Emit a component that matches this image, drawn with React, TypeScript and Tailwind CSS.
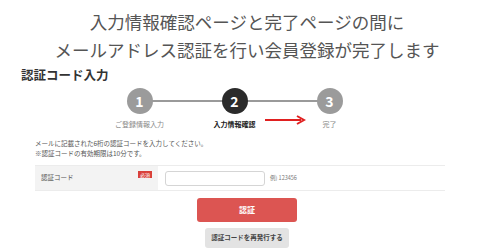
import React from 'react';

const steps = [
  { no: 1, label: 'ご登録情報入力', state: 'done' },
  { no: 2, label: '入力情報確認', state: 'current' },
  { no: 3, label: '完了', state: 'todo' },
];

export default function App() {
  return (
    <div className="w-[494px] h-[251px] bg-white overflow-hidden text-[#444] font-['Noto_Sans_CJK_JP','Noto_Sans',sans-serif]">
      {/* Caption */}
      <div className="pt-[8px] text-center text-[17.5px] leading-[28px] text-[#555]">
        <p>入力情報確認ページと完了ページの間に</p>
        <p>メールアドレス認証を行い会員登録が完了します</p>
      </div>

      <h2 className="mt-[1px] pl-[21px] text-[12.5px] leading-[20px] font-bold text-[#333]">認証コード入力</h2>

      {/* Stepper */}
      <div className="relative mt-[3px] flex pl-[92px]">
        <div className="absolute left-[140px] top-[12px] w-[190px] h-[2px] bg-[#9a9a9a]" />
        {steps.map((s) => (
          <div key={s.no} className="relative w-[95px] flex flex-col items-center">
            <div
              className={`w-[26px] h-[26px] rounded-full flex items-center justify-center text-[14px] font-bold text-white ${
                s.state === 'current' ? 'bg-[#2b2b2b]' : 'bg-[#9b9b9b]'
              }`}
            >
              {s.no}
            </div>
            <span
              className={`mt-[5px] text-[7px] leading-[10px] ${
                s.state === 'current' ? 'font-bold text-[#222]' : 'text-[#888]'
              }`}
            >
              {s.label}
            </span>
          </div>
        ))}
        <svg className="absolute left-[264px] top-[27px]" width="42" height="10" viewBox="0 0 42 10">
          <line x1="1" y1="5" x2="37" y2="5" stroke="#e02020" strokeWidth="2" />
          <path d="M33 1 L40 5 L33 9" fill="none" stroke="#e02020" strokeWidth="2" />
        </svg>
      </div>

      {/* Notes */}
      <div className="mt-[9px] pl-[35px] text-[6.5px] leading-[10px] text-[#555]">
        <p>メールに記載された6桁の認証コードを入力してください。</p>
        <p>※認証コードの有効期限は10分です。</p>
      </div>

      {/* Form row */}
      <div className="mt-[7px] ml-[35px] w-[410px] h-[26px] flex border-y border-[#ececec]">
        <div className="w-[123px] bg-[#f3f3f3] flex items-start justify-between pl-[6px] pr-[6px] pt-[6px]">
          <span className="text-[6.5px] leading-[10px] text-[#555]">認証コード</span>
          <span className="bg-[#d9403a] text-white text-[5px] leading-[7px] px-[2px] mt-[-1px]">必須</span>
        </div>
        <div className="flex items-center pl-[7px] gap-[5px]">
          <div className="w-[100px] h-[15px] rounded-[3px] border border-[#d5d5d5] bg-white" />
          <span className="text-[5.5px] text-[#777]">例) 123456</span>
        </div>
      </div>

      {/* Buttons */}
      <div className="mt-[7px] flex flex-col items-center gap-[6px]">
        <button className="w-[100px] h-[24px] rounded-[3px] bg-[#dc5552] text-white text-[8px] font-bold">認証</button>
        <button className="w-[84px] h-[20px] rounded-[3px] bg-[#e3e3e3] text-[#444] text-[6.5px] font-bold">認証コードを再発行する</button>
      </div>
    </div>
  );
}
